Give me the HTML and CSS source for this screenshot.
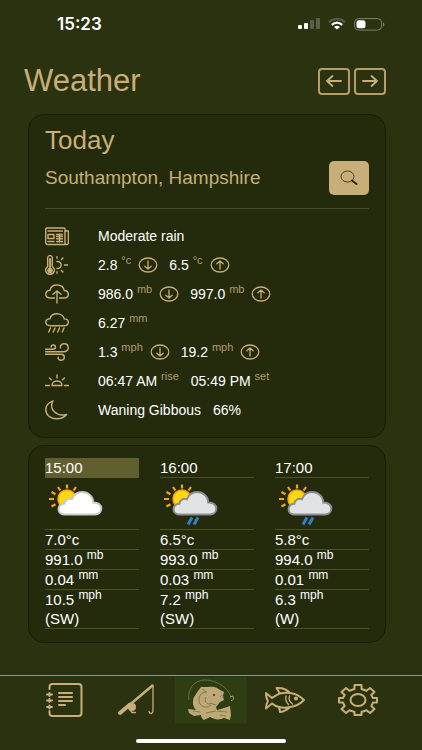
FILE: index.html
```html
<!DOCTYPE html>
<html lang="en">
  <head>
    <meta charset="UTF-8" />
    <meta name="viewport" content="width=device-width, initial-scale=1.0" />
    <title>Weather</title>
    <link rel="stylesheet" href="styles.css">
  </head>
  <body>
    <svg class="sprite" aria-hidden="true">
      <symbol id="down" viewBox="0 0 20 16">
        <ellipse cx="10" cy="8" rx="8.8" ry="7" />
        <path d="M10 4v8M6.8 9.200L10 12l3.200-2.800" />
      </symbol>
      <symbol id="up" viewBox="0 0 20 16">
        <ellipse cx="10" cy="8" rx="8.8" ry="7" />
        <path d="M10 12V4M6.800 6.800L10 4l3.200 2.800" />
      </symbol>
      <symbol id="sun-cloud" viewBox="0 0 60 50">
        <circle cx="22" cy="20" r="9" fill="#ffd90f" stroke="#f9a01b" stroke-width="1.500" />
        <path d="M22 5.500v4M13 8l2.400 3.500M31 8l-2.400 3.500M6.500 13l4 2.300M4 20h5M6.500 27.500l4-2.200" stroke="#f2a51c" stroke-width="2.200" fill="none" />
        <path d="M20 35.500c-4 0-6.500-2.400-6.500-5.500 0-3.200 2.700-5.400 5.800-5.200.3-3.600 4-5.800 7.700-4.600 1.600-4.200 5.300-7.200 10-7.200 6.500 0 11.300 4.800 11.300 10.600 4.700-.2 8 2.300 8 6 0 3.500-2.600 5.900-6.300 5.900z" stroke-width="2" />
      </symbol>
    </svg>

    <div class="status">
      <span class="clock">15:23</span>
      <div class="status-icons">
        <svg width="22" height="12" viewBox="0 0 22 12">
          <rect x="0" y="7" width="4" height="4" rx="1" fill="#fff" />
          <rect x="6" y="5" width="4" height="6" rx="1" fill="#fff" />
          <rect x="12" y="2" width="4" height="9" rx="1" fill="#59604a" />
          <rect x="18" y="0" width="4" height="11" rx="1" fill="#59604a" />
        </svg>
        <svg width="18" height="12" viewBox="0 0 18 12">
          <path d="M1 4.200C5.500 0 12.500 0 17 4.200" fill="none" stroke="#59604a" stroke-width="2" />
          <path d="M3.800 6.800C7 4 11 4 14.200 6.800" fill="none" stroke="#fff" stroke-width="2.200" />
          <path d="M6 8.900c2-1.700 4-1.700 6 0l-3 2.600z" fill="#fff" />
        </svg>
        <svg width="31" height="13" viewBox="0 0 31 13">
          <rect x="0.600" y="0.600" width="27" height="11.500" rx="4" fill="none" stroke="#7a8070" />
          <rect x="2.500" y="2.300" width="9" height="8" rx="2.500" fill="#fff" />
          <path d="M29 4.500c1.800.4 1.800 3.500 0 4z" fill="#7a8070" />
        </svg>
      </div>
    </div>

    <header class="header">
      <h1>Weather</h1>
      <div class="nav-buttons">
        <button class="nav-button" aria-label="Previous day">
          <svg class="line" width="18" height="14" viewBox="0 0 18 14"><path d="M16 7H2M7.500 2L2 7l5.500 5" /></svg>
        </button>
        <button class="nav-button" aria-label="Next day">
          <svg class="line" width="18" height="14" viewBox="0 0 18 14"><path d="M2 7h14M10.500 2L16 7l-5.500 5" /></svg>
        </button>
      </div>
    </header>

    <main>
      <section class="card today">
        <h2>Today</h2>
        <div class="location">
          <h3>Southampton, Hampshire</h3>
          <button class="search" aria-label="Search location">
            <svg width="18" height="16" viewBox="0 0 18 16">
              <ellipse cx="7.500" cy="6.500" rx="6.500" ry="5.500" fill="none" stroke="#4a431f" />
              <path d="M12 10.500l4.500 3.500" stroke="#29290d" stroke-width="2" stroke-linecap="round" />
            </svg>
          </button>
        </div>

        <ul class="details">
          <li>
            <svg class="line icon" viewBox="0 0 24 20">
              <path d="M20 3v13.500c0 2.800 3.400 2.800 3.400 0V5H20M20 16.500c0 1.200.4 2 1.500 2H2.500c-1 0-1.800-.8-1.800-1.800V3.200C.7 2.500 1.200 2 2 2h17c.6 0 1 .4 1 1" />
              <path d="M3 5h14.500M3 8.500h6v4H3zM11.500 8.500h6M11.500 10.500h6M3 15.500h6M11.500 12.800h6M11.500 15.500h6M14.500 8v8" />
            </svg>
            <span>Moderate rain</span>
          </li>
          <li>
            <svg class="line icon" viewBox="0 0 24 20">
              <path d="M2.700 11.500V2.800c0-2.900 4.600-2.900 4.600 0v8.700c4.400 3.300 1 7.800-2.300 7.800s-6.700-4.500-2.300-7.800z" />
              <path d="M5 4v11" stroke-width="1.800" />
              <circle cx="5" cy="15.500" r="2" class="solid" />
              <path d="M12 6.500c5.500-.5 5.500 7.500 0 7M12 1.800v1.500M16.500 4.500l1.400-1.500M19.500 10H22.500M16.500 15.500l1.400 1.500M12 16.800v1.500" />
            </svg>
            <span>2.8 <sup>°c</sup></span>
            <svg class="line arrow"><use href="#down" /></svg>
            <span>6.5 <sup>°c</sup></span>
            <svg class="line arrow"><use href="#up" /></svg>
          </li>
          <li>
            <svg class="line icon" viewBox="0 0 24 20">
              <path d="M9.500 14H5.200C2.400 14 .8 12.300.8 10.200c0-2.200 1.800-3.700 4.300-4C5.500 3.200 8.200 1 12 1c4 0 6.700 2.300 7.200 5.500 2.400.1 4.100 1.600 4.100 3.700 0 2.200-1.800 3.800-4.500 3.800h-4.300" />
              <path d="M12 19V7M8 10.300L12 7l4 3.300" />
            </svg>
            <span>986.0 <sup>mb</sup></span>
            <svg class="line arrow"><use href="#down" /></svg>
            <span>997.0 <sup>mb</sup></span>
            <svg class="line arrow"><use href="#up" /></svg>
          </li>
          <li>
            <svg class="line icon" viewBox="0 0 24 20">
              <path d="M5.200 12.700C2.400 12.700.8 11.300.8 9.300c0-2 1.800-3.400 4.200-3.600C5.700 2.800 8.300.8 12 .8s6.700 2.200 7.200 5.100c2.400.1 4.100 1.400 4.100 3.300 0 2.100-1.800 3.500-4.500 3.500z" />
              <path d="M5.500 15l-1.800 4M10 15l-1.800 4M14.500 15l-1.800 4M19 15l-1.800 4" />
            </svg>
            <span>6.27 <sup>mm</sup></span>
          </li>
          <li>
            <svg class="line icon" viewBox="0 0 24 20">
              <path d="M.5 7.200H8c3.500-.2 3-4.200.2-4.200-1.500 0-2.300 1-2 2M.5 9.700H19c6.300-.4 5-7.900.3-7.900-3 0-4.300 2-3.800 4M.5 12.200H16c4.800.3 4 6 .3 6-2.500 0-3.500-1.500-3-3" />
            </svg>
            <span>1.3 <sup>mph</sup></span>
            <svg class="line arrow"><use href="#down" /></svg>
            <span>19.2 <sup>mph</sup></span>
            <svg class="line arrow"><use href="#up" /></svg>
          </li>
          <li>
            <svg class="line icon" viewBox="0 0 24 20">
              <path d="M.5 14.500h4M19.500 14.500h4M7 14.500h10c0-6-10-6-10 0zM12 4v3M4.500 7l2 1.800M19.500 7l-2 1.800" />
            </svg>
            <span>06:47 AM <sup>rise</sup></span>
            <span class="next">05:49 PM <sup>set</sup></span>
          </li>
          <li>
            <svg class="line icon" viewBox="0 0 24 20">
              <path d="M8 .8C4.200 2.200.8 5.500.8 9.800c0 5 4.600 9 10.800 9 4.300 0 8-1.800 10-4.300C11.500 17 3.500 9.500 8 .8z" />
            </svg>
            <span>Waning Gibbous</span>
            <span class="next">66%</span>
          </li>
        </ul>
      </section>

      <section class="card">
        <table class="hours">
          <thead>
            <tr>
              <th class="now">15:00</th>
              <th>16:00</th>
              <th>17:00</th>
            </tr>
          </thead>
          <tbody>
            <tr class="pictures">
              <td>
                <svg class="sky" viewBox="0 0 60 50" role="img" aria-label="Sunny intervals">
                  <use href="#sun-cloud" />
                </svg>
              </td>
              <td>
                <svg class="sky showers" viewBox="0 0 60 50" role="img" aria-label="Light showers">
                  <use href="#sun-cloud" />
                  <path class="drops" d="M32 38.500l-4 7M38 38.500l-4 7" />
                </svg>
              </td>
              <td>
                <svg class="sky showers" viewBox="0 0 60 50" role="img" aria-label="Light showers">
                  <use href="#sun-cloud" />
                  <path class="drops" d="M32 38.500l-4 7M38 38.500l-4 7" />
                </svg>
              </td>
            </tr>
            <tr>
              <td>7.0°c</td>
              <td>6.5°c</td>
              <td>5.8°c</td>
            </tr>
            <tr>
              <td>991.0 <sup>mb</sup></td>
              <td>993.0 <sup>mb</sup></td>
              <td>994.0 <sup>mb</sup></td>
            </tr>
            <tr>
              <td>0.04 <sup>mm</sup></td>
              <td>0.03 <sup>mm</sup></td>
              <td>0.01 <sup>mm</sup></td>
            </tr>
            <tr>
              <td>10.5 <sup>mph</sup><br>(SW)</td>
              <td>7.2 <sup>mph</sup><br>(SW)</td>
              <td>6.3 <sup>mph</sup><br>(W)</td>
            </tr>
          </tbody>
        </table>
      </section>
    </main>

    <nav class="tabs">
      <div class="tab-row">
        <a href="#log" class="tab" aria-label="Log">
          <svg class="line" width="38" height="34" viewBox="0 0 38 34">
            <path d="M4.500 6V4c0-2 1-3 3-3h26c2 0 3 1 3 3v26c0 2-1 3-3 3h-26c-2 0-3-1-3-3v-2M14 10h13M14 14h13M14 18h13M14 22h6" />
            <path d="M2 11.500h5M2 17.500h5M2 24h5M4.500 10v3M4.500 16v3M4.500 22.500v3" />
          </svg>
        </a>
        <a href="#tackle" class="tab" aria-label="Tackle">
          <svg class="line" width="40" height="32" viewBox="0 0 40 32">
            <path d="M3 29L35.500 1.500" stroke-width="2.500" />
            <path d="M3 29l10-8.500" stroke-width="4" />
            <path d="M36 2v25c0 3-3.500 3.500-4 .5M11 23l4 5.500h3.500" stroke-width="1.300" />
            <circle cx="15" cy="23" r="3" class="solid" />
          </svg>
        </a>
        <a href="#weather" class="tab active" aria-label="Weather">
          <svg width="48" height="42" viewBox="0 0 48 42">
            <path d="M2 21C0 9 8 1 18 1c11 0 23 7 26 17" fill="none" stroke="#77764a" stroke-width=".8" />
            <path d="M43 18l3-1c1 3 0 5-2 4.500" fill="none" stroke="#a7986a" />
            <path d="M14 8l-3 4-4 6c-2 5-1 10 2 13l-8-1 1 4 5 3 7-1c0 2 1 4 3 5l6-3c5 3 10 3 14 1l6 2 1-5-1-9-6 2-7 2-1-3 4-5 4-2-1-4 1-4-4-2c-3-3-7-4-12-3z" fill="#bda878" />
            <path d="M20 13c-6 0-10 5-7 12 3 4 8 4 11 1M19 18c-2 4 0 7 4 7M23 24l6 2M33 18c1.500-3 4-2 2.500 1M30 32l10 1M33 36l6 1M19 34l10-2M6 32l7 1M15 10l4 3" fill="none" stroke="#837a4b" />
            <circle cx="27" cy="16" r="1" fill="#2b300f" />
          </svg>
        </a>
        <a href="#fish" class="tab" aria-label="Fish">
          <svg class="line" width="42" height="28" viewBox="0 0 42 28">
            <path d="M2 7l6 5c3-2 6-4 8-4.500L12.500 2c6-.5 10 1 13.500 5 6 .5 10 3 14 7-4 4-8 6.500-14 7-3 3-6 4.500-10 5l-1-5c-3-.7-5-1.700-7-3.500l-6 5c0-3 .5-5 2-7.500-1.500-2-2-4-2-8zM16 7.500c3-.8 7-1 10-.5M15 21c4 1.300 7 1 11 0" />
            <path d="M22 10c-1 4 0 6 2.500 8.500M25.500 10c-1 4 0 5.500 3 8" stroke-width="1.300" />
            <circle cx="32" cy="12.500" r="1" class="solid" />
          </svg>
        </a>
        <a href="#settings" class="tab" aria-label="Settings">
          <svg class="line" width="40" height="34" viewBox="0 0 40 34">
            <path d="M16.500 2h7v4l5 1.800 3.500-2.800 4.500 4-3.200 3 1.700 3h4v4.500h-4l-1.700 3.500 3.200 3-4.500 4-3.500-2.800-5 1.800V32h-7v-3l-5-1.800L8 30l-4.500-4 3.200-3L5 19.500H1V15h4l1.700-3-3.200-3L8 5l3.500 2.800 5-1.800z" />
            <ellipse cx="20" cy="17" rx="7.500" ry="6" />
          </svg>
        </a>
      </div>
      <div class="home-bar"></div>
    </nav>
  </body>
</html>
```
FILE: styles.css
```css
* {
  box-sizing: border-box;
}
body {
  margin: 0;
  min-height: 100vh;
  display: flex;
  flex-direction: column;
  background-color: #2a3210;
  color: #fff;
  font-family: "Liberation Sans", Arial, sans-serif;
  font-size: 14px;
}
h1,
h2,
h3 {
  margin: 0;
  font-weight: normal;
  color: #c8ae78;
}
button {
  padding: 0;
  cursor: pointer;
}
svg {
  display: block;
}
.sprite {
  position: absolute;
  width: 0;
  height: 0;
}
.line {
  fill: none;
  stroke: #c8ae78;
  stroke-linecap: round;
  stroke-linejoin: round;
}
.solid {
  fill: #c8ae78;
}

/* phone status bar */
.status {
  display: flex;
  justify-content: space-between;
  align-items: center;
  height: 48px;
  padding: 0 37px 0 57px;
}
.clock {
  font-family: Inter, sans-serif;
  font-size: 17px;
  font-weight: 600;
}
.status-icons {
  display: flex;
  align-items: center;
  gap: 8px;
}

.header {
  display: flex;
  justify-content: space-between;
  align-items: center;
  height: 66px;
  padding: 0 36px 0 24px;
}
h1 {
  font-size: 31px;
}
.nav-buttons {
  display: flex;
  gap: 4px;
}
.nav-button {
  display: flex;
  align-items: center;
  justify-content: center;
  width: 32px;
  height: 27px;
  background: none;
  border: 2px solid #b59d6a;
  border-radius: 4px;
}
.nav-button svg {
  stroke-width: 1.8;
}

main {
  display: flex;
  flex-direction: column;
  gap: 7px;
  padding: 0 36px 0 28px;
}
.card {
  padding: 12px 16px 13px;
  background-color: #242b0d;
  border: 1px solid #171c05;
  border-radius: 16px;
}
h2 {
  font-size: 26px;
  line-height: 26px;
}
.location {
  display: flex;
  justify-content: space-between;
  align-items: center;
  margin-top: 8px;
  padding-bottom: 13px;
  border-bottom: 1px solid #454a24;
}
h3 {
  font-size: 19px;
}
.search {
  display: flex;
  align-items: center;
  justify-content: center;
  width: 40px;
  height: 34px;
  background-color: #c8ae78;
  border: none;
  border-radius: 5px;
}

.details {
  margin: 12px 0 0;
  padding: 0;
  list-style: none;
}
.details li {
  display: flex;
  align-items: center;
  height: 29px;
}
.details sup {
  color: #b39c69;
  font-size: 11px;
}
sup {
  line-height: 0;
}
.icon {
  width: 24px;
  height: 20px;
  margin-right: 29px;
  stroke-width: 1.4;
}
.arrow {
  width: 20px;
  height: 16px;
  margin: 0 11px 0 7px;
  stroke-width: 1.3;
}
.next {
  margin-left: 12px;
}

/* border-spacing also adds space at the sides, the negative margin takes it away */
.hours {
  width: calc(100% + 42px);
  margin: 0 -21px;
  table-layout: fixed;
  border-collapse: separate;
  border-spacing: 21px 0;
  font-size: 15px;
  line-height: 19px;
}
.hours th,
.hours td {
  padding: 0;
  font-weight: normal;
  text-align: left;
  border-bottom: 1px solid #4c5023;
}
.hours th.now {
  background-color: #615f30;
  border-color: #615f30;
}
.hours sup {
  font-size: 12px;
}
.hours .pictures td {
  height: 52px;
}
.sky {
  width: 60px;
  height: 50px;
  fill: #fff;
  stroke: #c9c9c9;
}
.showers {
  fill: #e2e3e6;
  stroke: #8d8d8d;
}
.drops {
  fill: none;
  stroke: #2e80c9;
  stroke-width: 3;
}

.tabs {
  margin-top: auto;
  border-top: 1px solid #a8925f;
}
.tab-row {
  display: grid;
  grid-template-columns: repeat(5, 1fr);
  gap: 2px;
  padding: 1px 28px 0;
}
.tab {
  display: flex;
  align-items: center;
  justify-content: center;
  height: 46px;
}
.tab .line {
  stroke-width: 2;
}
.active {
  background-color: #2f3d13;
}
.home-bar {
  width: 150px;
  height: 4px;
  margin: 16px auto 7px;
  background-color: #fff;
  border-radius: 2px;
}
```
